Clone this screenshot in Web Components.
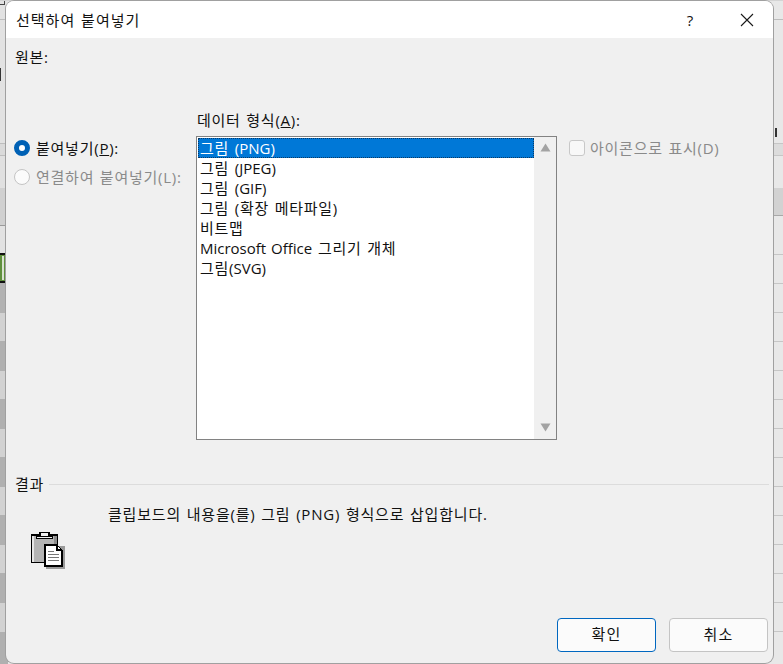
<!DOCTYPE html>
<html lang="ko"><head><meta charset="utf-8">
<style>
html,body{margin:0;padding:0;width:783px;height:664px;overflow:hidden;background:#e4e4e4}
body{font-family:"Open Sans","Noto Sans CJK KR",sans-serif;font-size:15px;color:#1a1a1a}
</style></head><body>
<paste-desktop>
<paste-dialog title-text="선택하여 붙여넣기">
  <paste-body></paste-body>
</paste-dialog>
</paste-desktop>
<script>
function def(name,html,init){customElements.define(name,class extends HTMLElement{connectedCallback(){if(this.shadowRoot)return;const r=this.attachShadow({mode:'open'});r.innerHTML=html;if(init)init(this,r);}})}
const FONT='"Open Sans","Noto Sans CJK KR",sans-serif';
const LS='letter-spacing:.75px;word-spacing:1px;';
def('paste-desktop',`<style>
:host{display:block;position:relative;width:783px;height:664px;overflow:hidden;
background:linear-gradient(#e8e8e8 0 19px,#bdbdbd 19px 20px,#e8e8e8 20px 143px,#c6c6c6 143px 144px,#dcdcdc 144px 155px,#c6c6c6 155px 156px,#e8e8e8 156px 188px,#d2d2d2 188px 215px,#a8a8a8 215px 216px,#e8e8e8 216px 254px,#c6c6c6 254px 255px,#e8e8e8 255px 283px,#c6c6c6 283px 284px,#e8e8e8 284px 312px,#c6c6c6 312px 313px,#e8e8e8 313px 341px,#c6c6c6 341px 342px,#e8e8e8 342px 370px,#c6c6c6 370px 371px,#e8e8e8 371px 399px,#c6c6c6 399px 400px,#e8e8e8 400px 428px,#c6c6c6 428px 429px,#e8e8e8 429px 457px,#c6c6c6 457px 458px,#e8e8e8 458px 486px,#c6c6c6 486px 487px,#e8e8e8 487px 515px,#c6c6c6 515px 516px,#e8e8e8 516px 544px,#c6c6c6 544px 545px,#e8e8e8 545px 573px,#c6c6c6 573px 574px,#e8e8e8 574px 602px,#c6c6c6 602px 603px,#e8e8e8 603px 631px,#c6c6c6 631px 632px,#e8e8e8 632px)}
.l{position:absolute;left:0;top:0;width:8px;height:664px;background:linear-gradient(#e2e2e2 0 19px,#bdbdbd 19px 20px,#e2e2e2 20px 143px,#bdbdbd 143px 144px,#dadada 144px 155px,#bdbdbd 155px 156px,#e0e0e0 156px 188px,#d0d0d0 188px 225px,#9a9a9a 225px 226px,#e2e2e2 226px 253px,#111 253px 255px,#5f8f3c 255px 281px,#111 281px 283px,#b2b2b2 283px 313px,#d2d2d2 313px 341px,#b0b0b0 341px 371px,#d2d2d2 371px 399px,#b0b0b0 399px 429px,#d2d2d2 429px 457px,#b0b0b0 457px 487px,#d2d2d2 487px 515px,#b0b0b0 515px 545px,#d2d2d2 545px 573px,#b0b0b0 573px 603px,#d2d2d2 603px 632px,#b0b0b0 632px)}
.m{position:absolute;left:0;top:68px;width:1px;height:13px;background:#333}
.g{position:absolute;left:2px;top:256px;width:2px;height:24px;background:#d8e2cf}
.c{position:absolute;left:0;top:0;width:5px;height:5px;box-sizing:border-box;border-right:1px solid #444;border-bottom:1px solid #444}
.r{position:absolute;left:775px;top:128px;width:2px;height:9px;background:#333}
.t{position:absolute;left:0;right:0;top:0;height:1px;background:linear-gradient(90deg,#d4d4d4 0 47px,#8a8a8a 47px 113px,#d4d4d4 113px 270px,#999 270px 295px,#d4d4d4 295px 315px,#8a8a8a 315px 350px,#d4d4d4 350px 420px,#8a8a8a 420px 440px,#d4d4d4 440px 520px,#444 520px 530px,#d4d4d4 530px 560px,#333 560px 568px,#d4d4d4 568px 575px,#333 575px 588px,#d4d4d4 588px)}
.wrap{position:relative;display:flex;padding:1px 10px 1px 6px;box-sizing:border-box;height:664px}
</style><div class="l"></div><div class="g"></div><div class="m"></div><div class="c"></div><div class="r"></div><div class="t"></div><div class="wrap"><slot></slot></div>`);
def('paste-dialog',`<style>
:host{display:flex;flex-direction:column;width:767px;height:662px;box-sizing:border-box;border-radius:8px;overflow:hidden;background:#f0f0f0;box-shadow:0 0 0 1px #a0a0a0}
header{flex:none;height:37px;background:#fff;display:flex;align-items:center;padding:0 0 0 10px;font:15px ${FONT};color:#111}
.t{flex:1;letter-spacing:1px;word-spacing:1px}
.q{width:20px;text-align:center;margin-right:40px;font-size:15px}
svg{margin-right:19px;display:block}
main{flex:1;display:flex;min-height:0}
</style><header><span class="t" id="t"></span><span class="q">?</span><svg width="14" height="14" viewBox="0 0 14 14"><path d="M1 1L13 13M13 1L1 13" stroke="#1a1a1a" stroke-width="1.1" fill="none"/></svg></header><main><slot></slot></main>`,(h,r)=>{r.getElementById('t').textContent=h.getAttribute('title-text')});
def('format-list',`<style>
:host{display:flex;width:361px;height:304px;box-sizing:border-box;border:1px solid #828282;background:#fff;font:15px ${FONT};color:#111;padding:1px;${LS}}
ul{list-style:none;margin:0;padding:0;flex:1;min-width:0}
li{height:20px;line-height:20px;padding:0 3px 0 2px;box-sizing:border-box;white-space:nowrap}
li.sel{background:#0078d7;color:#fff;outline:1px dotted #0a3a66;outline-offset:-1px}
.lat{letter-spacing:0}
.sb{flex:none;width:22px;background:#f0f0f0;display:flex;flex-direction:column;justify-content:space-between;align-items:center;padding:6px 0 7px;box-sizing:border-box;margin:-1px -1px -1px 0}
</style><ul>
<li class="sel">그림 <span class="lat">(PNG)</span></li><li>그림 <span class="lat">(JPEG)</span></li><li>그림 <span class="lat">(GIF)</span></li><li>그림 (확장 메타파일)</li><li>비트맵</li><li><span class="lat">Microsoft Office</span> 그리기 개체</li><li>그림<span class="lat">(SVG)</span></li>
</ul><div class="sb"><svg width="11" height="9" viewBox="0 0 11 9"><path d="M5.5 0.5L10.5 8.5H.5Z" fill="#a3a3a3"/></svg><svg width="11" height="9" viewBox="0 0 11 9"><path d="M5.5 8.5L10.5 .5H.5Z" fill="#a3a3a3"/></svg></div>`);
def('radio-opt',`<style>
:host{display:flex;align-items:center;gap:6px;height:20px;white-space:nowrap;font:15px ${FONT};color:#111;${LS}}
:host([disabled]){color:#8a8a8a}
i{flex:none;width:16px;height:16px;box-sizing:border-box;border-radius:50%;background:#fbfbfb;border:1px solid #c4c4c4;margin-left:-1px}
:host([checked]) i{background:#fff;border:5px solid #0061b5}
span{margin-bottom:2px}
u{text-decoration-thickness:1px}
</style><i></i><span><slot></slot></span>`);
def('check-opt',`<style>
:host{display:flex;align-items:center;gap:5px;height:20px;white-space:nowrap;font:15px ${FONT};color:#8a8a8a;${LS}}
i{flex:none;width:16px;height:16px;box-sizing:border-box;border-radius:3px;background:#f8f8f8;border:1px solid #c8c8c8}
span{margin-bottom:2px}
</style><i></i><span><slot></slot></span>`);
def('dlg-button',`<style>
:host{display:flex;align-items:center;justify-content:center;width:99px;height:34px;box-sizing:border-box;background:#fbfbfb;border:1px solid #c4c4c4;border-radius:4px;font:15px ${FONT};color:#111;letter-spacing:1.2px;padding-bottom:3px}
:host([primary]){border-color:#0067c0}
</style><slot></slot>`);
def('clip-icon',`<style>:host{display:block;width:34px;height:37px}svg{display:block}</style>
<svg width="34" height="37" viewBox="0 0 34 37" shape-rendering="crispEdges">
<rect x="0" y="2" width="27" height="29" fill="#000"/>
<rect x="1" y="4" width="25" height="26" fill="#b4b4b4"/>
<rect x="1" y="4" width="2" height="26" fill="#e6e6e6"/>
<rect x="23" y="4" width="3" height="26" fill="#8c8c8c"/>
<rect x="8" y="0" width="11" height="4" fill="#000"/>
<rect x="10" y="1" width="7" height="3" fill="#f0f0f0"/>
<rect x="5" y="4" width="17" height="3" fill="#000"/>
<rect x="6" y="5" width="15" height="1" fill="#f0f0f0"/>
<rect x="15" y="14" width="19" height="23" fill="#9a9a9a"/>
<path d="M13 12H27V14H28V15H29V16H30V17H31V18H32V35H13Z" fill="#000"/>
<path d="M15 14H25V19H30V33H15Z" fill="#fff"/>
<path d="M27 15H28V16H29V17H27Z" fill="#fff"/>
<rect x="17" y="19" width="6" height="1" fill="#777"/>
<rect x="17" y="22" width="11" height="1" fill="#777"/>
<rect x="17" y="25" width="11" height="1" fill="#777"/>
<rect x="17" y="28" width="11" height="1" fill="#777"/>
</svg>`);
def('paste-body',`<style>
:host{flex:1;display:flex;flex-direction:column;box-sizing:border-box;padding:0 4px 11px 9px;font:15px ${FONT};color:#111;min-width:0;${LS}}
.src{margin-top:9px;height:20px;line-height:20px}
.mid{display:flex;margin-top:44px}
.opts{width:181px;flex:none;padding-top:27px;display:flex;flex-direction:column;gap:9px}
.fmt{flex:none;width:361px}
.lab{height:20px;line-height:20px;margin:-1px 0 6px 1px}
.rt{margin:27px 0 0 12px}
.res{display:flex;align-items:center;gap:5px;margin-top:34px;height:20px}
.res b{font-weight:400;margin-bottom:2px}
.res hr{flex:1;border:0;border-top:1px solid #dcdcdc;margin:0}
.desc{margin:10px 0 0 93px;height:20px;line-height:20px;white-space:nowrap;letter-spacing:.8px;word-spacing:1px}
.ico{margin:8px 0 0 16px}
.btns{margin-top:auto;display:flex;justify-content:flex-end;gap:13px;padding-right:1px}
u{text-decoration-thickness:1px}
</style>
<div class="src">원본:</div>
<div class="mid">
 <div class="opts"><radio-opt checked>붙여넣기(<u>P</u>):</radio-opt><radio-opt disabled>연결하여 붙여넣기(L):</radio-opt></div>
 <div class="fmt"><div class="lab">데이터 형식(<u>A</u>):</div><format-list></format-list></div>
 <div class="rt"><check-opt>아이콘으로 표시(D)</check-opt></div>
</div>
<div class="res"><b>결과</b><hr></div>
<div class="desc">클립보드의 내용을(를) 그림 (PNG) 형식으로 삽입합니다.</div>
<clip-icon class="ico"></clip-icon>
<div class="btns"><dlg-button primary>확인</dlg-button><dlg-button>취소</dlg-button></div>`);
</script>
</body></html>
